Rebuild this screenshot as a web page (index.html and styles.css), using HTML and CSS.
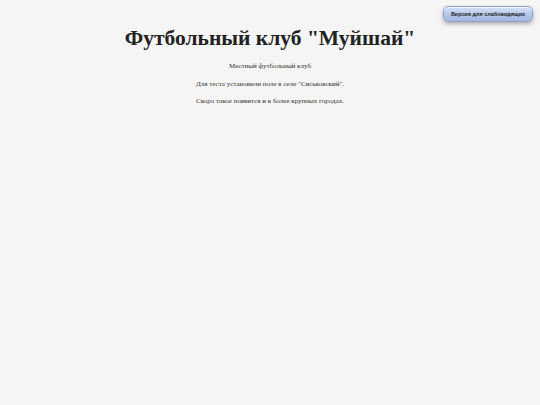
FILE: index.html
```html
<!DOCTYPE html>
<html lang="ru">
<head>
<meta charset="utf-8">
<title>Футбольный клуб "Муйшай"</title>
<link rel="stylesheet" href="styles.css">
</head>
<body>
<div class="topbar">
  <button class="vision-btn">Версия для слабовидящих</button>
</div>
<main class="content">
  <h1 class="title">Футбольный клуб "Муйшай"</h1>
  <p class="text">Местный футбольный клуб</p>
  <p class="text">Для теста установили поле в селе "Сиськовский".</p>
  <p class="text">Скоро такое появится и в более крупных городах.</p>
</main>
</body>
</html>
```
FILE: styles.css
```css
html, body {
  margin: 0;
  padding: 0;
}
body {
  background: #f5f5f5;
  color: #222;
  font-family: "Liberation Serif", "Times New Roman", serif;
  width: 540px;
  height: 405px;
  overflow: hidden;
  position: relative;
}
.topbar {
  position: absolute;
  top: 6px;
  right: 7px;
}
.vision-btn {
  display: block;
  width: 90px;
  height: 16px;
  padding: 0;
  border: 1px solid #8ea2c8;
  border-radius: 5px;
  background: linear-gradient(#d6e2f6 0%, #b6c8ea 50%, #a4b9e2 100%);
  box-shadow: 0 2px 4px rgba(0,0,0,0.3), inset 0 1px 0 rgba(255,255,255,0.7);
  font-family: "Liberation Sans", Arial, sans-serif;
  font-size: 5.5px;
  font-weight: bold;
  color: #222;
  white-space: nowrap;
}
.content {
  padding-top: 26px;
  text-align: center;
}
.title {
  margin: 0 0 12px;
  font-size: 21.5px;
  font-weight: bold;
  line-height: 24px;
  color: #222;
}
.text {
  margin: 0;
  font-size: 7px;
  line-height: 8px;
  padding-bottom: 9.5px;
  color: #333;
}
```
